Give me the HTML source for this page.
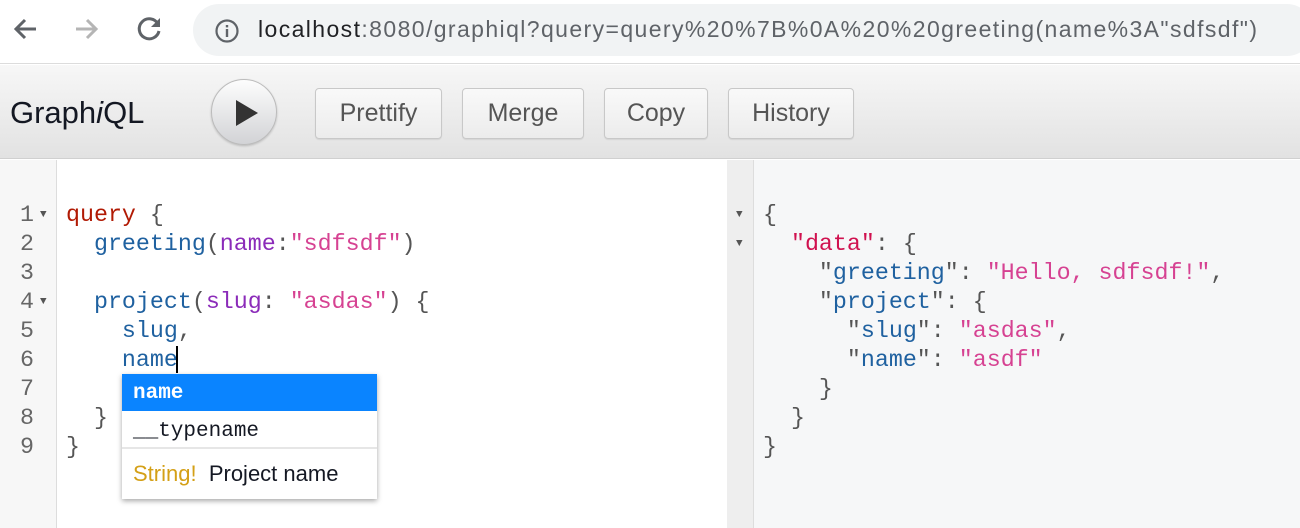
<!DOCTYPE html>
<html><head><style>
*{margin:0;padding:0;box-sizing:border-box}
body{width:1300px;height:528px;overflow:hidden;background:#fff;font-family:"Liberation Sans",sans-serif;position:relative}
.abs{position:absolute}
.top{left:0;top:0;width:1300px;height:64px;background:#fff;border-bottom:1px solid #dcdcdc}
.url{left:193px;top:4px;width:1120px;height:52px;border-radius:26px;background:#f1f3f4}
.urltext{left:258px;top:16px;font-size:23px;letter-spacing:1.4px;color:#5f6368;white-space:nowrap}
.urltext b{font-weight:normal;color:#202124}
.tb{left:0;top:65px;width:1300px;height:94px;background:linear-gradient(#f7f7f7,#e2e2e2);border-bottom:1px solid #d0d0d0}
.logo{left:10px;top:95px;font-size:31px;color:#141823}
.run{left:211px;top:79px;width:66px;height:66px;border-radius:50%;background:linear-gradient(#fdfdfd,#d2d3d6);border:1px solid #bbb;box-shadow:0 1px 2px rgba(0,0,0,.2)}
.btn{top:88px;height:51px;border:1px solid #c8c8c8;border-radius:4px;background:linear-gradient(#f9f9f9,#ececec);font-size:25px;color:#555;text-align:center;line-height:49px;box-shadow:0 1px 1px rgba(0,0,0,.08)}
.gut{left:0;top:160px;width:57px;height:368px;background:#f7f7f7;border-right:1px solid #ddd}
.res{left:727px;top:160px;width:573px;height:368px;background:#f6f7f8}
.rgut{left:727px;top:160px;width:27px;height:368px;background:#eee;border-right:1px solid #ddd}
.code{font-family:"Liberation Mono","DejaVu Sans Mono",monospace;font-size:23.3px;line-height:29px;white-space:pre;color:#1f61a0}
.ln{color:#666;text-align:right}
.kw{color:#b11a04}.at{color:#8b2bb9}.st{color:#d64292}.pu{color:#555}.df{color:#1f61a0}
.tri{font-size:11px;color:#555}
.ac{left:122px;top:374px;width:255px;height:125px;background:#fff;box-shadow:0 2px 5px rgba(0,0,0,.35)}
</style></head><body>
<div class="abs top"></div>
<svg class="abs" style="left:10px;top:14px" width="30" height="30" viewBox="0 0 30 30"><path d="M26 15H6M15 6l-9 9 9 9" stroke="#5f6368" stroke-width="3" fill="none"/></svg>
<svg class="abs" style="left:72px;top:14px" width="30" height="30" viewBox="0 0 30 30"><path d="M4 15h20M15 6l9 9-9 9" stroke="#b5b5b5" stroke-width="3" fill="none"/></svg>
<svg class="abs" style="left:134px;top:14px" width="30" height="30" viewBox="0 0 30 30"><path d="M24 10A10 10 0 1 0 25 17" stroke="#5f6368" stroke-width="3" fill="none"/><path d="M26 4v9h-9z" fill="#5f6368"/></svg>
<div class="abs url"></div>
<svg class="abs" style="left:214px;top:18px" width="26" height="26" viewBox="0 0 26 26"><circle cx="13" cy="13" r="10.5" stroke="#5f6368" stroke-width="2.2" fill="none"/><rect x="11.8" y="11" width="2.4" height="8" fill="#5f6368"/><rect x="11.8" y="7" width="2.4" height="2.4" fill="#5f6368"/></svg>
<div class="abs urltext"><b>localhost</b>:8080/graphiql?query=query%20%7B%0A%20%20greeting(name%3A"sdfsdf")</div>
<div class="abs tb"></div>
<div class="abs logo">Graph<i>i</i>QL</div>
<div class="abs run"></div>
<svg class="abs" style="left:234px;top:99px" width="26" height="28" viewBox="0 0 26 28"><path d="M2 1L24 14 2 27z" fill="#333"/></svg>
<div class="abs btn" style="left:315px;width:127px">Prettify</div>
<div class="abs btn" style="left:462px;width:122px">Merge</div>
<div class="abs btn" style="left:604px;width:104px">Copy</div>
<div class="abs btn" style="left:728px;width:126px">History</div>
<div class="abs gut"></div>
<div class="abs code ln" style="left:0;top:201px;width:34px">1
2
3
4
5
6
7
8
9</div>
<div class="abs code tri" style="left:40px;top:201px"><span>▼</span>


<span>▼</span></div>
<div class="abs code" style="left:66px;top:201px"><span class="kw">query</span> <span class="pu">{</span>
  greeting<span class="pu">(</span><span class="at">name</span><span class="pu">:</span><span class="st">"sdfsdf"</span><span class="pu">)</span>

  project<span class="pu">(</span><span class="at">slug</span><span class="pu">:</span> <span class="st">"asdas"</span><span class="pu">)</span> <span class="pu">{</span>
    slug<span class="pu">,</span>
    name
  
  <span class="pu">}</span>
<span class="pu">}</span></div>
<div class="abs" style="left:176px;top:346px;width:2px;height:27px;background:#000"></div>
<div class="abs res"></div>
<div class="abs rgut"></div>
<div class="abs code tri" style="left:736px;top:201px">▼
▼</div>
<div class="abs code" style="left:763px;top:201px"><span class="pu">{</span>
  <span class="kw" style="color:#d0114f">"data"</span><span class="pu">: {</span>
    <span class="pu">"</span>greeting<span class="pu">":</span> <span class="st">"Hello, sdfsdf!"</span><span class="pu">,</span>
    <span class="pu">"</span>project<span class="pu">": {</span>
      <span class="pu">"</span>slug<span class="pu">":</span> <span class="st">"asdas"</span><span class="pu">,</span>
      <span class="pu">"</span>name<span class="pu">":</span> <span class="st">"asdf"</span>
    <span class="pu">}</span>
  <span class="pu">}</span>
<span class="pu">}</span></div>
<div class="abs ac">
<div class="code" style="height:37px;background:#0a84ff;color:#fff;font-weight:bold;padding-left:11px;line-height:39px;font-size:21px">name</div>
<div class="code" style="height:38px;color:#141823;padding-left:11px;line-height:42px;font-size:21px;border-bottom:2px solid #e6e6e6">__typename</div>
<div style="height:48px;line-height:50px;padding-left:11px;font-size:22px;color:#141823"><span style="color:#d4a017">String!</span>&nbsp; Project name</div>
</div>
</body></html>
